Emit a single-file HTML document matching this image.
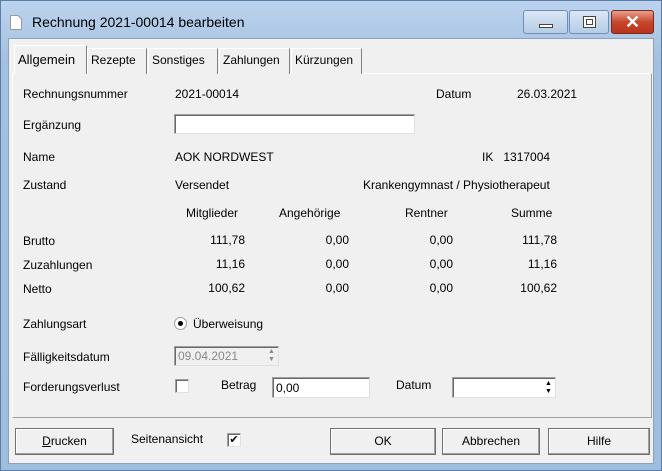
<!DOCTYPE html><html><head><style>
*{margin:0;padding:0;box-sizing:border-box}
body{width:662px;height:471px;background:#a8c4e4;font-family:"Liberation Sans",sans-serif;font-size:12px;color:#000;position:relative;overflow:hidden}
.frame{position:absolute;left:0;top:0;width:662px;height:471px;background:linear-gradient(#bcd3ee,#a4c0e0 60px,#9ebddf);border:1px solid #5a7ea8}
.abs{position:absolute;white-space:nowrap}
.client{position:absolute;left:8px;top:38px;width:646px;height:426px;background:#f0f0f0;border:1px solid #8aa2c0}
.panel{position:absolute;left:12px;top:73px;width:640px;height:345px;border:1px solid #fff;border-right-color:#a0a0a0;border-bottom-color:#a0a0a0}
.tab{position:absolute;top:48px;height:26px;border:1px solid #fff;border-right-color:#808080;border-bottom:none;padding:4px 3px 0;background:#f0f0f0}
.in{position:absolute;background:#fff;border:1px solid #a0a0a0;border-right-color:#e0e0e0;border-bottom-color:#e0e0e0;box-shadow:inset 1px 1px 0 #696969}
.btn{position:absolute;height:27px;border:1px solid #707070;background:#f0f0f0;box-shadow:inset -1px -1px 0 #a0a0a0,inset 1px 1px 0 #fff;text-align:center;line-height:25px}
.r{text-align:right}
</style></head><body>
<div class="frame"></div>
<svg class="abs" style="left:10px;top:15px" width="12" height="15"><path d="M0.5 0.5H8L11.5 4V14.5H0.5Z" fill="#fff" stroke="#999"/></svg>
<div class="abs" style="left:32px;top:14px;font-size:14px">Rechnung 2021-00014 bearbeiten</div>
<div class="abs" style="left:523px;top:10px;width:45px;height:24px;border:1px solid #6e8eb5;border-radius:3px;background:linear-gradient(#dbe7f5,#b6cce6)"><div style="position:absolute;left:15px;top:13px;width:14px;height:4px;background:#fff;border:1px solid #444"></div></div>
<div class="abs" style="left:569px;top:10px;width:40px;height:24px;border:1px solid #6e8eb5;border-radius:3px;background:linear-gradient(#dbe7f5,#b6cce6)"><div style="position:absolute;left:13px;top:5px;width:13px;height:12px;border:1px solid #444;background:#fff"><div style="margin:2px;width:7px;height:6px;border:1px solid #444"></div></div></div>
<div class="abs" style="left:611px;top:10px;width:43px;height:24px;border:1px solid #7a2a1a;border-radius:3px;background:linear-gradient(#e8a090,#c8462c 50%,#b8341c);color:#fff;font-weight:bold;font-size:18px;text-align:center;line-height:22px">✕</div>
<div class="client"></div>
<div class="panel"></div>
<div class="tab" style="left:14px;top:45px;height:29px;width:73px;padding-top:6px;font-size:13px">Allgemein</div>
<div class="tab" style="left:87px;width:60px">Rezepte</div>
<div class="tab" style="left:148px;width:70px">Sonstiges</div>
<div class="tab" style="left:219px;width:71px">Zahlungen</div>
<div class="tab" style="left:291px;width:71px">Kürzungen</div>

<div class="abs" style="left:23px;top:87px">Rechnungsnummer</div>
<div class="abs" style="left:175px;top:87px">2021-00014</div>
<div class="abs" style="left:436px;top:87px">Datum</div>
<div class="abs" style="left:517px;top:87px">26.03.2021</div>
<div class="abs" style="left:23px;top:118px">Ergänzung</div>
<div class="in" style="left:174px;top:114px;width:241px;height:20px"></div>
<div class="abs" style="left:23px;top:150px">Name</div>
<div class="abs" style="left:175px;top:150px">AOK NORDWEST</div>
<div class="abs" style="left:482px;top:150px">IK&nbsp;&nbsp; 1317004</div>
<div class="abs" style="left:23px;top:178px">Zustand</div>
<div class="abs" style="left:175px;top:178px">Versendet</div>
<div class="abs" style="left:363px;top:178px">Krankengymnast / Physiotherapeut</div>
<div class="abs" style="left:186px;top:206px">Mitglieder</div>
<div class="abs" style="left:279px;top:206px">Angehörige</div>
<div class="abs" style="left:405px;top:206px">Rentner</div>
<div class="abs" style="left:511px;top:206px">Summe</div>
<div class="abs" style="left:23px;top:234px">Brutto</div>
<div class="abs" style="left:23px;top:258px">Zuzahlungen</div>
<div class="abs" style="left:23px;top:282px">Netto</div>
<div class="abs r" style="left:145px;top:234px;width:100px">111,78<br><span style="line-height:24px">11,16</span><br>100,62</div>
<div class="abs r" style="left:249px;top:234px;width:100px;line-height:24px;top:228px">0,00<br>0,00<br>0,00</div>
<div class="abs r" style="left:353px;top:228px;width:100px;line-height:24px">0,00<br>0,00<br>0,00</div>
<div class="abs r" style="left:457px;top:228px;width:100px;line-height:24px">111,78<br>11,16<br>100,62</div>
<div class="abs r" style="left:145px;top:228px;width:100px;line-height:24px;background:#f0f0f0">111,78<br>11,16<br>100,62</div>

<div class="abs" style="left:23px;top:317px">Zahlungsart</div>
<div class="abs" style="left:174px;top:317px;width:13px;height:13px;border-radius:50%;background:#fff;border:1px solid #a0a0a0"><div style="margin:3px;width:5px;height:5px;border-radius:50%;background:#000"></div></div>
<div class="abs" style="left:193px;top:317px">Überweisung</div>
<div class="abs" style="left:23px;top:350px">Fälligkeitsdatum</div>
<div class="in" style="left:174px;top:346px;width:105px;height:20px;background:#f0f0f0;color:#888;padding:2px 3px">09.04.2021</div>
<div class="abs" style="left:266px;top:348px;width:11px;height:16px;font-size:7px;color:#888;line-height:8px;text-align:center">▲<br>▼</div>
<div class="abs" style="left:23px;top:380px">Forderungsverlust</div>
<div class="in" style="left:175px;top:379px;width:14px;height:14px"></div>
<div class="abs" style="left:221px;top:378px">Betrag</div>
<div class="in" style="left:272px;top:377px;width:98px;height:21px;padding:3px 3px">0,00</div>
<div class="abs" style="left:396px;top:378px">Datum</div>
<div class="in" style="left:452px;top:377px;width:104px;height:21px"></div>
<div class="abs" style="left:543px;top:380px;width:11px;height:16px;font-size:7px;line-height:8px;text-align:center">▲<br>▼</div>

<div class="btn" style="left:15px;top:428px;width:99px"><u>D</u>rucken</div>
<div class="abs" style="left:131px;top:432px">Seitenansicht</div>
<div class="in" style="left:227px;top:433px;width:14px;height:14px;font-size:11px;line-height:12px;text-align:center">✔</div>
<div class="btn" style="left:330px;top:428px;width:106px">OK</div>
<div class="btn" style="left:442px;top:428px;width:98px">Abbrechen</div>
<div class="btn" style="left:548px;top:428px;width:102px">Hilfe</div>
</body></html>
